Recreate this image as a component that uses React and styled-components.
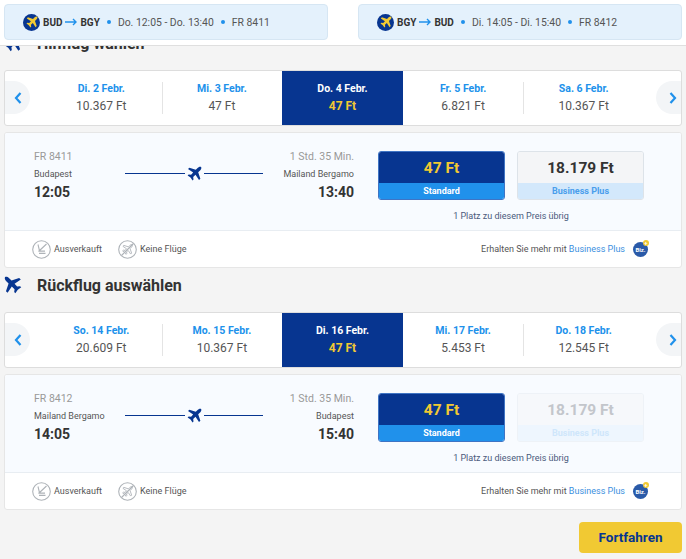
import React from 'react';
import styled, { createGlobalStyle } from 'styled-components';

const GlobalStyle = createGlobalStyle`
    html, body {
        margin: 0;
        padding: 0;
        background: #f4f4f4;
        font-family: Roboto, "Liberation Sans", sans-serif;
    }
    * { box-sizing: border-box; }
`;

const planePath = 'M22.6 1.4c-1.5-.9-3.9 0-5.2 1.3L14 6.1 3.8 2.6 1.6 4.8l8.3 5.6-3.4 3.7-3.9-.5L1 15.1l4.6 3.3 3.3 4.6 1.5-1.6-.5-3.9 3.7-3.4 5.6 8.3 2.2-2.2L17.9 10l3.4-3.4c1.3-1.3 2.2-3.7 1.3-5.2z';

const outbound = {
    dates: [
        { day: 'Di. 2 Febr.', price: '10.367 Ft' },
        { day: 'Mi. 3 Febr.', price: '47 Ft' },
        { day: 'Do. 4 Febr.', price: '47 Ft', active: true },
        { day: 'Fr. 5 Febr.', price: '6.821 Ft' },
        { day: 'Sa. 6 Febr.', price: '10.367 Ft' },
    ],
    code: 'FR 8411', from: 'Budapest', depart: '12:05', to: 'Mailand Bergamo', arrive: '13:40',
};

const inbound = {
    dates: [
        { day: 'So. 14 Febr.', price: '20.609 Ft' },
        { day: 'Mo. 15 Febr.', price: '10.367 Ft' },
        { day: 'Di. 16 Febr.', price: '47 Ft', active: true },
        { day: 'Mi. 17 Febr.', price: '5.453 Ft' },
        { day: 'Do. 18 Febr.', price: '12.545 Ft' },
    ],
    code: 'FR 8412', from: 'Mailand Bergamo', depart: '14:05', to: 'Budapest', arrive: '15:40',
    plusDisabled: true,
};

const Plane = ({ size, color = '#073590' }) => (
    <svg width={size} height={size} viewBox="0 0 24 24"><path d={planePath} fill={color} /></svg>
);

const ArrowIcon = () => (
    <svg width="12" height="8" viewBox="0 0 12 8" fill="none" stroke="#2091eb" strokeWidth="1.4">
        <path d="M0 4h11M8 1l3 3-3 3" />
    </svg>
);

const Chevron = ({ side }) => (
    <svg width="8" height="12" viewBox="0 0 8 12" fill="none" stroke="#2091eb" strokeWidth="2.2">
        <path d={side === 'left' ? 'M6.5 1L2 6l4.5 5' : 'M1.5 1L6 6l-4.5 5'} />
    </svg>
);

const Summary = ({ from, to, time, code }) => (
    <SummaryCard>
        <RoundLogo><Plane size={12} color="#f1c933" /></RoundLogo>
        <Route>{from}<ArrowIcon />{to}</Route>
        <Dot />
        <span>{time}</span>
        <Dot />
        <span>{code}</span>
    </SummaryCard>
);

const SoldOutIcon = () => (
    <svg width="19" height="19" viewBox="0 0 19 19" fill="none" stroke="#aeb3b8" strokeWidth="1.1">
        <circle cx="9.5" cy="9.5" r="8.8" />
        <path d="M6 4.5l1.6 6.6h5.4M7 13.4h6.5M6.5 11.5l8-7.5" />
    </svg>
);

const NoFlightIcon = () => (
    <svg width="19" height="19" viewBox="0 0 19 19" fill="none" stroke="#aeb3b8" strokeWidth="1.1">
        <circle cx="9.5" cy="9.5" r="8.8" />
        <g transform="translate(4.2 4.2) scale(0.44)"><path d={planePath} strokeWidth="2" /></g>
        <path d="M3.5 15.5l12-12" />
    </svg>
);

const DateStrip = ({ dates }) => (
    <Strip>
        <StripArrow side="left"><Chevron side="left" /></StripArrow>
        {dates.map((d, i) => (
            <DateCell key={d.day} $active={d.active} $divided={i === 1 || i === 4}>
                <DateDay $active={d.active}>{d.day}</DateDay>
                <DatePrice $active={d.active}>{d.price}</DatePrice>
            </DateCell>
        ))}
        <StripArrow side="right"><Chevron side="right" /></StripArrow>
    </Strip>
);

const FlightCard = ({ flight }) => (
    <Card>
        <CardMain>
            <Times>
                <Endpoint>
                    <Muted>{flight.code}</Muted>
                    <City>{flight.from}</City>
                    <Clock>{flight.depart}</Clock>
                </Endpoint>
                <Track>
                    <TrackLine />
                    <Plane size={15} />
                    <TrackLine />
                </Track>
                <Endpoint $right>
                    <Muted>1 Std. 35 Min.</Muted>
                    <City>{flight.to}</City>
                    <Clock>{flight.arrive}</Clock>
                </Endpoint>
            </Times>
            <Fares>
                <FareRow>
                    <Fare $kind="standard">
                        <FarePrice $kind="standard">47 Ft</FarePrice>
                        <FareName $kind="standard">Standard</FareName>
                    </Fare>
                    <Fare $kind={flight.plusDisabled ? 'disabled' : 'plus'}>
                        <FarePrice $kind={flight.plusDisabled ? 'disabled' : 'plus'}>18.179 Ft</FarePrice>
                        <FareName $kind={flight.plusDisabled ? 'disabled' : 'plus'}>Business Plus</FareName>
                    </Fare>
                </FareRow>
                <SeatsLeft>1 Platz zu diesem Preis übrig</SeatsLeft>
            </Fares>
        </CardMain>
        <CardFooter>
            <Legend><SoldOutIcon />Ausverkauft</Legend>
            <Legend><NoFlightIcon />Keine Flüge</Legend>
            <Upsell>
                Erhalten Sie mehr mit&nbsp;<UpsellLink>Business Plus</UpsellLink>
                <BizBadge>Biz.</BizBadge>
            </Upsell>
        </CardFooter>
    </Card>
);

const App = () => (
    <>
        <GlobalStyle />
        <Page>
            <Header>
                <Summary from="BUD" to="BGY" time="Do. 12:05 - Do. 13:40" code="FR 8411" />
                <Summary from="BGY" to="BUD" time="Di. 14:05 - Di. 15:40" code="FR 8412" />
            </Header>
            <Content>
                <Section>
                    <Heading><HeadingIcon><Plane size={18} /></HeadingIcon>Hinflug wählen</Heading>
                    <DateStrip dates={outbound.dates} />
                    <FlightCard flight={outbound} />
                </Section>
                <Section>
                    <Heading><HeadingIcon $flip><Plane size={18} /></HeadingIcon>Rückflug auswählen</Heading>
                    <DateStrip dates={inbound.dates} />
                    <FlightCard flight={inbound} />
                </Section>
                <Actions><ContinueButton>Fortfahren</ContinueButton></Actions>
            </Content>
        </Page>
    </>
);

const Page = styled.div`
    width: 686px;
    height: 559px;
    overflow: hidden;
    background: #f4f4f4;
`;

const Header = styled.header`
    position: relative;
    z-index: 2;
    display: flex;
    justify-content: space-between;
    height: 46px;
    padding: 4px 4px 0;
    background: #fff;
    border-bottom: 1px solid #dfdfdf;
`;

const SummaryCard = styled.div`
    display: flex;
    align-items: center;
    gap: 7px;
    width: 324px;
    height: 36px;
    padding-left: 18px;
    background: #e4f1fc;
    border: 1px solid #d6e6f3;
    border-radius: 4px;
    font-size: 10.4px;
    color: #555;
`;

const RoundLogo = styled.span`
    display: flex;
    align-items: center;
    justify-content: center;
    width: 17px;
    height: 17px;
    margin-right: -4px;
    border-radius: 50%;
    background: #073590;
`;

const Route = styled.span`
    display: flex;
    align-items: center;
    gap: 3px;
    font-size: 10px;
    font-weight: 700;
    color: #333;
`;

const Dot = styled.span`
    width: 4px;
    height: 4px;
    border-radius: 50%;
    background: #2091eb;
`;

const Content = styled.main`
    margin-top: -15px;
    padding: 0 4px;
`;

const Section = styled.section`
    margin-bottom: 5px;
`;

const Heading = styled.h2`
    display: flex;
    align-items: center;
    height: 24px;
    margin: 0 0 15px;
    font-size: 16px;
    font-weight: 700;
    color: #333;
`;

const HeadingIcon = styled.span`
    display: flex;
    width: 33px;
    transform: ${props => (props.$flip ? 'scaleX(-1)' : 'none')};
    transform-origin: 9px 50%;
`;

const Strip = styled.div`
    position: relative;
    display: grid;
    grid-template-columns: repeat(5, 1fr);
    height: 56px;
    padding: 0 37px 0 36px;
    background: #fff;
    border: 1px solid #ddd;
    border-radius: 3px;
`;

const StripArrow = styled.span`
    position: absolute;
    top: 10px;
    ${props => props.side}: 0;
    display: flex;
    align-items: center;
    width: 25px;
    height: 33px;
    padding-left: ${props => (props.side === 'left' ? '9px' : '13px')};
    background: #f3f5f7;
    border-radius: ${props => (props.side === 'left' ? '0 17px 17px 0' : '17px 0 0 17px')};
`;

const DateCell = styled.div`
    position: relative;
    display: flex;
    flex-direction: column;
    align-items: center;
    justify-content: center;
    gap: 4px;
    padding-bottom: 2px;
    background: ${props => (props.$active ? '#073590' : 'transparent')};

    ${props => props.$divided && `
        &::before {
            content: '';
            position: absolute;
            left: 0;
            top: 11px;
            bottom: 11px;
            border-left: 1px solid #e4e4e4;
        }
    `}
`;

const DateDay = styled.span`
    font-size: 10.5px;
    font-weight: 700;
    color: ${props => (props.$active ? '#fff' : '#2091eb')};
`;

const DatePrice = styled.span`
    font-size: 12px;
    font-weight: ${props => (props.$active ? 700 : 400)};
    color: ${props => (props.$active ? '#f1c933' : '#555')};
`;

const Card = styled.article`
    margin-top: 6px;
    background: #fff;
    border: 1px solid #e6e6e6;
    border-radius: 3px;
    overflow: hidden;
`;

const CardMain = styled.div`
    display: flex;
    gap: 24px;
    height: 98px;
    padding: 17px 0 0 29px;
    background: #f8fbff;
    border-bottom: 1px solid #e8edf2;
`;

const Times = styled.div`
    display: flex;
    width: 320px;
`;

const Endpoint = styled.div`
    display: flex;
    flex-direction: column;
    align-items: ${props => (props.$right ? 'flex-end' : 'flex-start')};
    width: 80px;
    margin-left: ${props => (props.$right ? 'auto' : '0')};
    white-space: nowrap;
`;

const Muted = styled.span`
    font-size: 10.5px;
    line-height: 13px;
    color: #999;
`;

const City = styled.span`
    margin-top: 5px;
    font-size: 9px;
    line-height: 13px;
    color: #555;
`;

const Clock = styled.span`
    margin-top: 3px;
    font-size: 14px;
    font-weight: 700;
    line-height: 17px;
    color: #333;
`;

const Track = styled.div`
    display: flex;
    align-items: center;
    gap: 2px;
    width: 138px;
    height: 17px;
    margin: 15px 0 0 11px;
`;

const TrackLine = styled.span`
    flex: 1;
    border-top: 1px solid #073590;
`;

const Fares = styled.div`
    display: flex;
    flex-direction: column;
    margin-top: 1px;
`;

const FareRow = styled.div`
    display: flex;
    gap: 12px;
`;

const fareBorder = { standard: '#3f74c4', plus: '#dde3e9', disabled: '#eef2f7' };
const fareTop = { standard: '#073590', plus: '#f4f5f7', disabled: '#f6f8fb' };
const fareText = { standard: '#f1c933', plus: '#333', disabled: '#c3c6cb' };
const fareBottom = { standard: '#2091eb', plus: '#d3e8fb', disabled: '#eef6fe' };
const fareLabel = { standard: '#fff', plus: '#4a9eec', disabled: '#cfe6fb' };

const Fare = styled.div`
    display: flex;
    flex-direction: column;
    width: 127px;
    height: 49px;
    border: 1px solid ${props => fareBorder[props.$kind]};
    border-radius: 3px;
    overflow: hidden;
`;

const FarePrice = styled.div`
    flex: 1;
    display: flex;
    align-items: center;
    justify-content: center;
    background: ${props => fareTop[props.$kind]};
    font-size: 15.5px;
    font-weight: 700;
    color: ${props => fareText[props.$kind]};
`;

const FareName = styled.div`
    height: 16px;
    background: ${props => fareBottom[props.$kind]};
    font-size: 9px;
    font-weight: 700;
    line-height: 16px;
    text-align: center;
    color: ${props => fareLabel[props.$kind]};
`;

const SeatsLeft = styled.div`
    margin-top: 11px;
    font-size: 9px;
    line-height: 11px;
    text-align: center;
    color: #4a5a7c;
`;

const CardFooter = styled.div`
    display: flex;
    align-items: center;
    height: 36px;
    padding: 0 33px 0 27px;
    font-size: 9px;
    color: #555;
`;

const Legend = styled.span`
    display: flex;
    align-items: center;
    gap: 3px;
    margin-right: 16px;
`;

const Upsell = styled.span`
    display: flex;
    align-items: center;
    margin-left: auto;
`;

const UpsellLink = styled.span`
    color: #3b8fe0;
`;

const BizBadge = styled.span`
    position: relative;
    width: 15px;
    height: 15px;
    margin-left: 8px;
    border-radius: 50%;
    background: #2a5aa8;
    font-size: 6px;
    font-weight: 700;
    line-height: 16px;
    text-align: center;
    color: #fff;

    &::after {
        content: '+';
        position: absolute;
        top: -2px;
        right: -1px;
        width: 6px;
        height: 6px;
        border-radius: 50%;
        background: #f1c933;
        font-size: 6px;
        line-height: 6px;
        color: #fff;
    }
`;

const Actions = styled.div`
    display: flex;
    justify-content: flex-end;
    margin-top: 12px;
`;

const ContinueButton = styled.button`
    width: 103px;
    height: 31px;
    padding: 0 0 2px;
    border: 0;
    border-radius: 4px;
    background: #f1c933;
    font-family: inherit;
    font-size: 13.5px;
    font-weight: 700;
    color: #073590;
`;

export default App;
